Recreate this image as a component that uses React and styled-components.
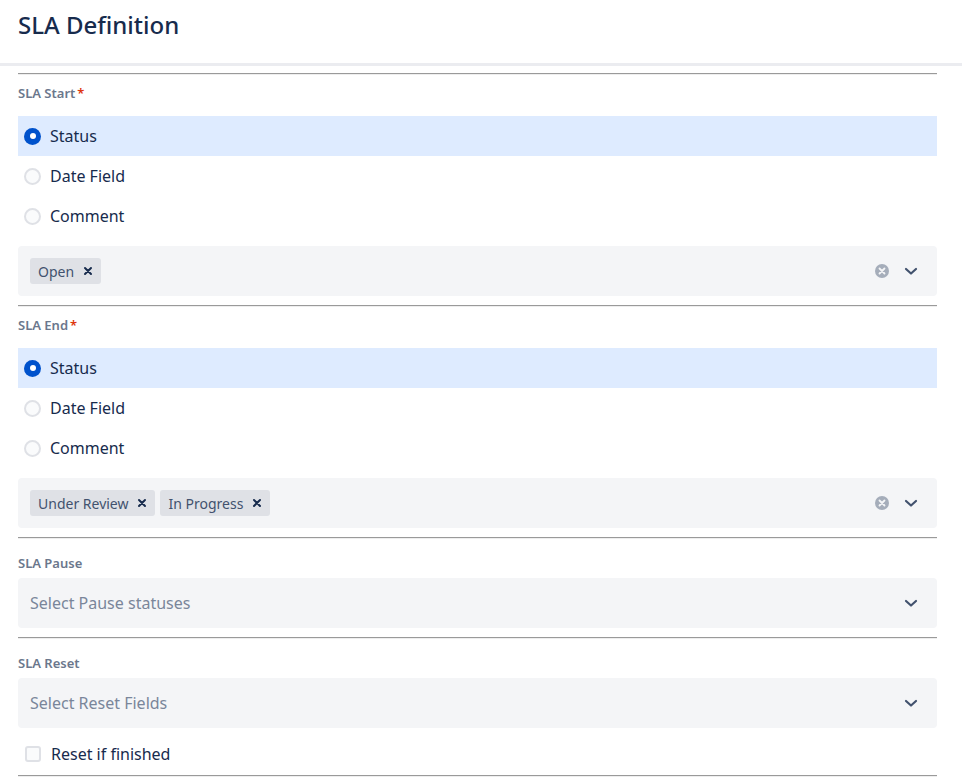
import React from 'react';
import styled, { createGlobalStyle } from 'styled-components';

const GlobalStyle = createGlobalStyle`
    body {
        margin: 0;
        background: #fff;
        font-family: "Noto Sans", "Open Sans", sans-serif;
        color: #172B4D;
    }
`;

function ClearIcon() {
    return (
        <svg width="16" height="16" viewBox="0 0 16 16">
            <circle cx="8" cy="8" r="7" fill="#A5ADBA" />
            <path d="M5.5 5.5 L10.5 10.5 M10.5 5.5 L5.5 10.5" stroke="#F4F5F7" strokeWidth="1.8" strokeLinecap="round" />
        </svg>
    );
}

function Chevron() {
    return (
        <svg width="16" height="16" viewBox="0 0 16 16">
            <path d="M3 6 L8 10.5 L13 6" fill="none" stroke="#42526E" strokeWidth="2.2" strokeLinecap="round" strokeLinejoin="round" />
        </svg>
    );
}

function TagClose() {
    return (
        <svg width="10" height="10" viewBox="0 0 10 10">
            <path d="M2 2 L8 8 M8 2 L2 8" stroke="#172B4D" strokeWidth="2" strokeLinecap="round" />
        </svg>
    );
}

function RadioGroup({ options, selected }) {
    return (
        <Radios>
            {options.map((opt) => (
                <RadioRow key={opt} active={opt === selected}>
                    <RadioDot active={opt === selected} />
                    <span>{opt}</span>
                </RadioRow>
            ))}
        </Radios>
    );
}

function Select({ tags, placeholder, clearable }) {
    return (
        <SelectBox>
            <SelectValue>
                {tags && tags.map((t) => (
                    <Tag key={t}>
                        {t}
                        <TagX><TagClose /></TagX>
                    </Tag>
                ))}
                {placeholder && <Placeholder>{placeholder}</Placeholder>}
            </SelectValue>
            <Indicators>
                {clearable && <ClearIcon />}
                <Chevron />
            </Indicators>
        </SelectBox>
    );
}

const options = ['Status', 'Date Field', 'Comment'];

export default function App() {
    return (
        <>
            <GlobalStyle />
            <Header>
                <Title>SLA Definition</Title>
            </Header>
            <Content>
                <Rule />
                <Label first>SLA Start<Req>*</Req></Label>
                <RadioGroup options={options} selected="Status" />
                <Select tags={['Open']} clearable />
                <Rule />
                <Label first>SLA End<Req>*</Req></Label>
                <RadioGroup options={options} selected="Status" />
                <Select tags={['Under Review', 'In Progress']} clearable />
                <Rule />
                <Label>SLA Pause</Label>
                <Select placeholder="Select Pause statuses" />
                <Rule />
                <Label>SLA Reset</Label>
                <Select placeholder="Select Reset Fields" />
                <CheckRow>
                    <CheckBox />
                    <span>Reset if finished</span>
                </CheckRow>
                <Rule />
            </Content>
        </>
    );
}

const Header = styled.div`
    height: 66px;
    border-bottom: 3px solid #EBECF0;
    padding-left: 18px;
    display: flex;
    align-items: center;
    box-sizing: border-box;
`

const Title = styled.h1`
    margin: 0 0 14px 0;
    font-size: 24px;
    font-weight: 500;
    color: #172B4D;
`

const Content = styled.div`
    padding: 7px 25px 0 18px;
    display: flex;
    flex-direction: column;
`

const Rule = styled.div`
    height: 0;
    border-top: 1px solid #9A9A9A;
    border-bottom: 1px solid #EEEEEE;
`

const Label = styled.div`
    font-size: 13px;
    font-weight: 600;
    color: #6B778C;
    line-height: 16px;
    margin-top: ${p => p.first ? '10px' : '16px'};
    margin-bottom: ${p => p.first ? '15px' : '7px'};
`

const Req = styled.span`
    color: #DE350B;
    margin-left: 2px;
`

const Radios = styled.div`
    display: flex;
    flex-direction: column;
    margin-bottom: 10px;
`

const RadioRow = styled.div`
    height: 40px;
    display: flex;
    align-items: center;
    padding-left: 6px;
    gap: 9px;
    font-size: 16px;
    color: #172B4D;
    background: ${p => p.active ? '#DEEBFF' : 'transparent'};
`

const RadioDot = styled.span`
    width: 17px;
    height: 17px;
    border-radius: 50%;
    box-sizing: border-box;
    background: ${p => p.active ? '#0052CC' : '#FAFBFC'};
    border: ${p => p.active ? 'none' : '2px solid #DFE1E6'};
    position: relative;
    &::after {
        content: '';
        display: ${p => p.active ? 'block' : 'none'};
        position: absolute;
        width: 6px;
        height: 6px;
        border-radius: 50%;
        background: #fff;
        left: 5.5px;
        top: 5.5px;
    }
`

const SelectBox = styled.div`
    height: 50px;
    background: #F4F5F7;
    border-radius: 4px;
    display: flex;
    align-items: center;
    justify-content: space-between;
    padding: 0 18px 0 12px;
    box-sizing: border-box;
    margin-bottom: 9px;
`

const SelectValue = styled.div`
    display: flex;
    align-items: center;
    gap: 5px;
`

const Tag = styled.span`
    height: 26px;
    display: flex;
    align-items: center;
    background: #DFE1E6;
    border-radius: 3px;
    padding: 0 8px;
    font-size: 14px;
    color: #42526E;
    gap: 9px;
`

const TagX = styled.span`
    display: flex;
    align-items: center;
`

const Placeholder = styled.span`
    font-size: 16px;
    color: #7A869A;
`

const Indicators = styled.div`
    display: flex;
    align-items: center;
    gap: 13px;
`

const CheckRow = styled.div`
    display: flex;
    align-items: center;
    gap: 10px;
    font-size: 16px;
    color: #172B4D;
    padding-left: 7px;
    height: 30px;
    margin-top: 2px;
    margin-bottom: 6px;
`

const CheckBox = styled.span`
    width: 16px;
    height: 16px;
    box-sizing: border-box;
    border: 2px solid #DFE1E6;
    border-radius: 3px;
    background: #FAFBFC;
`
